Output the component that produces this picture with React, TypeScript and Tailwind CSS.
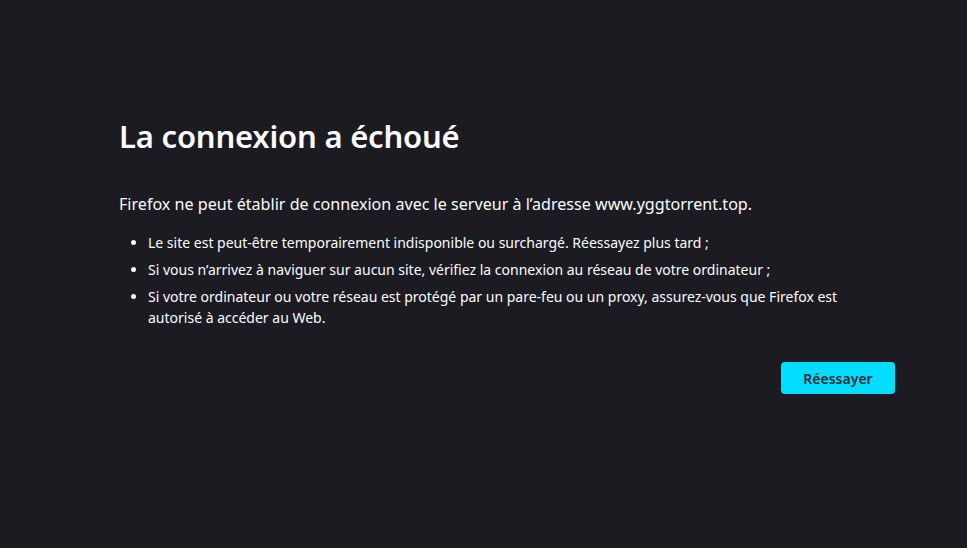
export default function App() {
  return (
    <div
      className="min-h-screen w-full bg-[#1c1b22] text-[#fbfbfe]"
      style={{ fontFamily: '"Noto Sans", "Open Sans", sans-serif' }}
    >
      <div className="pl-[119px] pr-[72px] pt-[114px]">
        <div className="w-[776px]">
          <h1 className="text-[31px] leading-[44px] font-semibold tracking-[-0.2px]">
            La connexion a échoué
          </h1>

          <p className="mt-[34px] text-[16.1px] leading-[24px]">
            Firefox ne peut établir de connexion avec le serveur à l’adresse www.yggtorrent.top.
          </p>

          <ul className="mt-[16px] w-[735px] pl-[29px] list-disc text-[14px] leading-[21px] space-y-[6px]">
            <li>Le site est peut-être temporairement indisponible ou surchargé. Réessayez plus tard ;</li>
            <li>Si vous n’arrivez à naviguer sur aucun site, vérifiez la connexion au réseau de votre ordinateur ;</li>
            <li>
              Si votre ordinateur ou votre réseau est protégé par un pare-feu ou un proxy, assurez-vous que Firefox est
              autorisé à accéder au Web.
            </li>
          </ul>

          <div className="mt-[34px] flex justify-end">
            <button className="h-[32px] w-[114px] rounded-[4px] bg-[#00ddff] text-[14px] font-semibold text-[#2b2a33]">
              Réessayer
            </button>
          </div>
        </div>
      </div>
    </div>
  );
}
